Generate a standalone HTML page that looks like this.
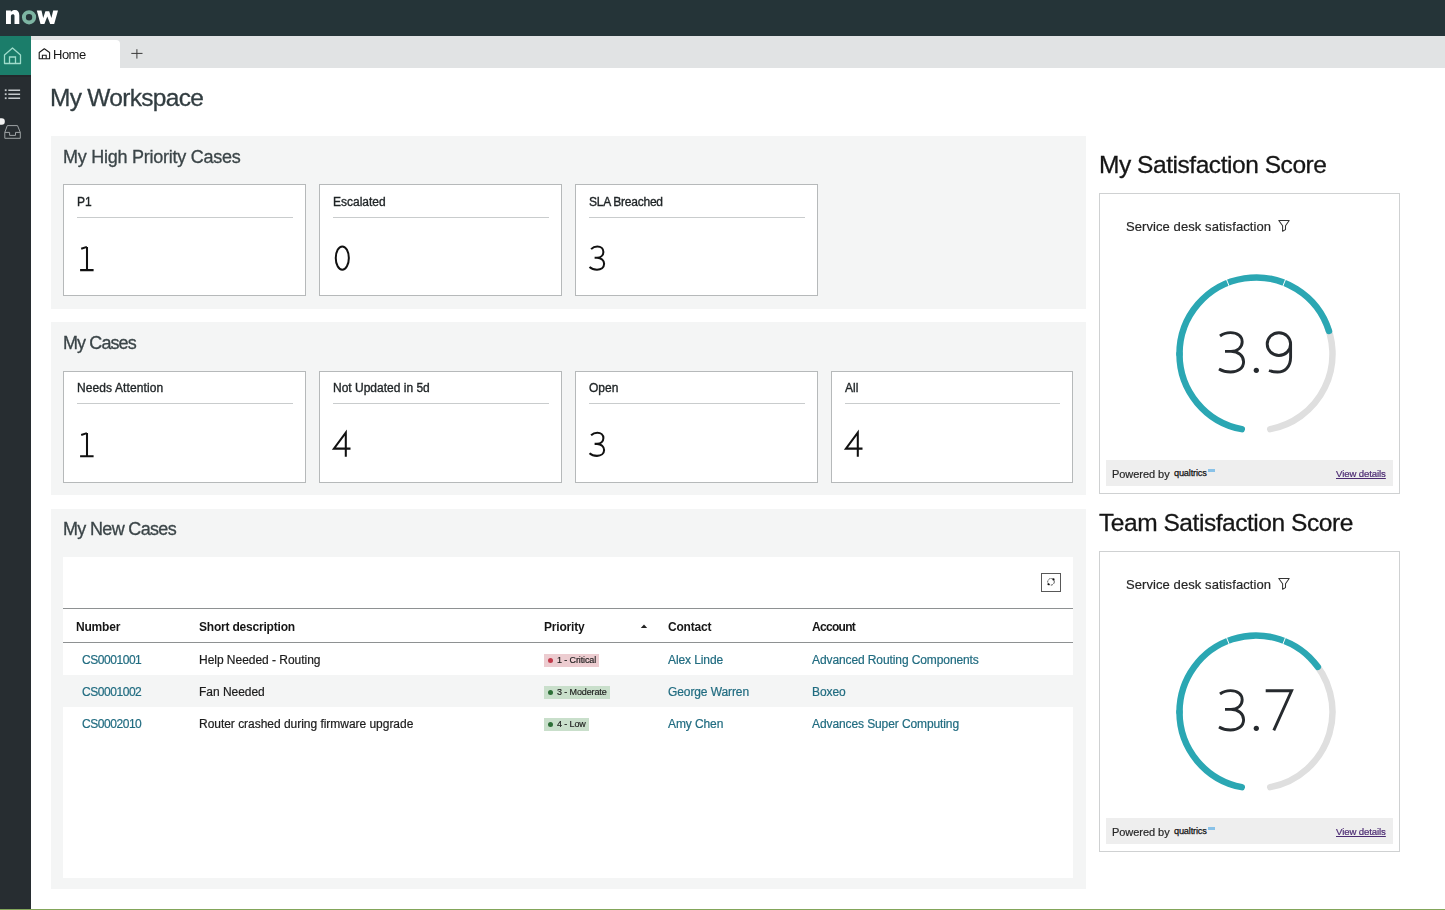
<!DOCTYPE html>
<html><head><meta charset="utf-8">
<style>
*{box-sizing:border-box;margin:0;padding:0}
html,body{-webkit-font-smoothing:antialiased;width:1445px;height:910px;overflow:hidden;background:#fff;font-family:"Liberation Sans",sans-serif;position:relative}
.a{position:absolute;white-space:nowrap}
.t,.ptitle,.lbl,.hdr,.cell,.badge,.stitle,.sds,.pow,.vd{will-change:transform}
.ptitle,.stitle,.tw{-webkit-text-stroke:0.3px currentColor}
.cell,.sds,.pow,.vd{-webkit-text-stroke:0.2px currentColor}
.t{position:absolute;white-space:nowrap;line-height:1}
#top{left:0;top:0;width:1445px;height:36px;background:#253438}
#side{left:0;top:36px;width:31px;height:874px;background:#272d31}
#homeact{left:0;top:36px;width:31px;height:39px;background:#1b7d6a}
#tabbar{left:31px;top:36px;width:1414px;height:32px;background:#e1e3e4}
#tab{left:31px;top:40px;width:89px;height:28px;background:#fff;border-top-right-radius:4px}
.panel{position:absolute;left:51px;width:1035px;background:#f4f5f5}
.card{position:absolute;width:243px;height:112px;background:#fff;border:1px solid #b6b9ba}
.card .lbl{position:absolute;left:13px;top:10px;font-size:12px;line-height:14px;color:#1f2426;letter-spacing:0px;-webkit-text-stroke:0.35px #1f2426}
.card.c2 .lbl{top:9px}.card.c2 .div{top:31px}
.card .div{position:absolute;left:13px;right:12px;top:32px;height:1px;background:#c9cccd}
.ptitle{position:absolute;left:12px;font-size:18px;line-height:18px;color:#3b4548;letter-spacing:-0.25px}
.hdr{position:absolute;font-size:12px;font-weight:bold;color:#161616;line-height:12px;letter-spacing:-0.2px}
.cell{position:absolute;font-size:12px;color:#1c1c1c;line-height:12px;letter-spacing:-0.1px}
.lnk{color:#216c80}
.badge{position:absolute;height:13px;font-size:9px;line-height:13px;padding-left:13px;padding-right:3px;color:#1a1a1a;letter-spacing:-0.12px;-webkit-text-stroke:0.15px #1a1a1a}
.badge i{position:absolute;left:3.5px;top:4px;width:5px;height:5px;border-radius:50%}
.stitle{position:absolute;left:1099px;font-size:24.5px;line-height:25px;color:#161616;letter-spacing:-0.45px}
.scard{position:absolute;left:1099px;width:301px;height:301px;border:1px solid #cfd1d2;background:#fff}
.sds{position:absolute;left:26px;top:26px;font-size:13px;line-height:14px;color:#262626;letter-spacing:0.08px}
.foot{position:absolute;left:6px;top:266px;width:287px;height:26px;background:#eeeeee}
.pow{position:absolute;left:6px;top:8px;font-size:11px;line-height:12px;color:#262626;letter-spacing:-0.05px}
.qual{position:absolute;left:68px;top:7.5px;font-size:9.5px;line-height:10px;color:#111;letter-spacing:-0.2px;transform:scaleX(0.97);transform-origin:left;-webkit-text-stroke:0.25px #111}
.xm{position:absolute;left:102px;top:9px;width:7px;height:2.5px;background:#6fb6e6;opacity:.8}
.vd{position:absolute;right:7px;top:7.5px;font-size:9.6px;line-height:12px;color:#4b2a72;text-decoration:underline;letter-spacing:-0.1px}
</style></head><body>
<div class="a" id="top"></div>
<svg class="a" style="left:0;top:0" width="70" height="36" viewBox="0 0 70 36">
  <path d="M6 24 V10.6 H10.9 V11.9 C11.9 10.7 13.3 10.1 15 10.1 C17.8 10.1 19.3 12.1 19.3 15.2 V24 H14.5 V15.8 C14.5 14.8 13.8 14.2 12.8 14.2 C11.7 14.2 10.9 15 10.9 16.1 V24 Z" fill="#fff"/>
  <circle cx="29.05" cy="17.3" r="5.15" fill="none" stroke="#7db5a3" stroke-width="3.9"/>
  <path d="M36.8 10.6 H41.5 L43.2 18 L45.4 11.2 H49.2 L51.4 18 L53.2 10.6 H58 L54.2 24 H50.2 L47.3 16.6 L44.4 24 H40.5 Z" fill="#fff"/>
</svg>
<div class="a" id="side"></div><div class="a" id="homeact"></div><div class="a" style="left:0;top:75px;width:31px;height:2px;background:#23272b"></div>
<svg class="a" style="left:0;top:36px" width="31" height="110" viewBox="0 36 31 110">
  <path d="M4.5 63.5 V55 L12.5 48 L20.5 55 V63.5 Z" fill="none" stroke="#9fdccb" stroke-width="1.3" stroke-linejoin="round"/>
  <path d="M9.5 63.5 V57 H15.5 V63.5" fill="none" stroke="#9fdccb" stroke-width="1.3"/>
  <g fill="#c5cacc">
    <rect x="4.8" y="89.3" width="1.8" height="1.8"/><rect x="8.3" y="89.5" width="11.8" height="1.5"/>
    <rect x="4.8" y="93.3" width="1.8" height="1.8"/><rect x="8.3" y="93.5" width="11.8" height="1.5"/>
    <rect x="4.8" y="97.3" width="1.8" height="1.8"/><rect x="8.3" y="97.5" width="11.8" height="1.5"/>
  </g>
  <path d="M4.8 132.4 L7.3 125.6 H17.5 L20.3 132.4 V138.3 H4.8 Z" fill="none" stroke="#9ea3a5" stroke-width="1"/>
  <path d="M4.8 132.4 H9.6 V135.4 H15.5 V132.4 H20.3" fill="none" stroke="#9ea3a5" stroke-width="1"/>
  <rect x="-4" y="118.3" width="8.8" height="6.4" rx="3" fill="#f2f2f2"/>
</svg>
<div class="a" id="tabbar"></div><div class="a" id="tab"></div>
<svg class="a" style="left:37px;top:46px" width="16" height="16" viewBox="37 46 16 16">
  <path d="M39.2 58.8 V52.5 L44.3 48.8 L49.6 52.5 V58.8 Z" fill="none" stroke="#1a1a1a" stroke-width="1.1" stroke-linejoin="round"/>
  <path d="M42.4 58.8 V55.3 H46.2 V58.8" fill="none" stroke="#1a1a1a" stroke-width="1.1"/>
</svg>
<div class="t" style="left:53px;top:48px;font-size:13px;color:#161616;letter-spacing:-0.5px">Home</div>
<svg class="a" style="left:128px;top:45px" width="18" height="18" viewBox="128 45 18 18">
  <path d="M136.9 49.2 V58.6 M131.3 53.4 H142.5" stroke="#3a3a3a" stroke-width="1"/>
</svg>
<div class="t tw" style="left:50px;top:85.5px;font-size:24.5px;color:#323d41;letter-spacing:-0.7px">My Workspace</div>
<div class="panel" style="top:136px;height:173px"><div class="ptitle" style="top:12px">My High Priority Cases</div></div>
<div class="panel" style="top:321.5px;height:173px"><div class="ptitle" style="top:12px;letter-spacing:-0.9px">My Cases</div></div>
<div class="panel" style="top:508.5px;height:380.5px"><div class="ptitle" style="top:11px;letter-spacing:-0.67px">My New Cases</div></div>
<div class="card" style="left:63px;top:184px;width:243px"><div class="lbl" style="letter-spacing:0px">P1</div><div class="div"></div><svg style="position:absolute;left:-1px;top:-1px" width="243" height="112" viewBox="0 0 243 112"><path d="M18.2 64.8 L23.9 62.9 M24 62.9 V86.2 M17.1 86.1 H30.6" transform="translate(0 0)" fill="none" stroke="#111" stroke-width="2.05"/></svg></div>
<div class="card" style="left:319px;top:184px;width:243px"><div class="lbl" style="letter-spacing:0px">Escalated</div><div class="div"></div><svg style="position:absolute;left:-1px;top:-1px" width="243" height="112" viewBox="0 0 243 112"><ellipse cx="23.3" cy="74.1" rx="6.55" ry="11.65" fill="none" stroke="#111" stroke-width="2"/></svg></div>
<div class="card" style="left:575px;top:184px;width:243px"><div class="lbl" style="letter-spacing:-0.25px">SLA Breached</div><div class="div"></div><svg style="position:absolute;left:-1px;top:-1px" width="243" height="112" viewBox="0 0 243 112"><path d="M16.1 65.1 C18 63.2 20 62.5 22.3 62.5 C26 62.5 28.4 64.8 28.4 67.9 C28.4 71.3 25.6 73.7 22 73.7 H19.6 M22 73.7 C26.2 73.7 29.1 76.4 29.1 79.8 C29.1 83.4 26 85.7 22 85.7 C19 85.7 16.4 84.8 14.5 83.1" transform="translate(0 0)" fill="none" stroke="#111" stroke-width="2.05"/></svg></div>
<div class="card c2" style="left:63px;top:371px;width:243px"><div class="lbl" style="letter-spacing:0.1px">Needs Attention</div><div class="div"></div><svg style="position:absolute;left:-1px;top:-1px" width="243" height="112" viewBox="0 0 243 112"><path d="M18.2 64.8 L23.9 62.9 M24 62.9 V86.2 M17.1 86.1 H30.6" transform="translate(0 -0.8)" fill="none" stroke="#111" stroke-width="2.05"/></svg></div>
<div class="card c2" style="left:319px;top:371px;width:243px"><div class="lbl" style="letter-spacing:0px">Not Updated in 5d</div><div class="div"></div><svg style="position:absolute;left:-1px;top:-1px" width="243" height="112" viewBox="0 0 243 112"><path d="M26.8 86.6 V62.4 L14.9 78.4 H31.5" transform="translate(0 -0.8)" fill="none" stroke="#111" stroke-width="2.05"/></svg></div>
<div class="card c2" style="left:575px;top:371px;width:243px"><div class="lbl" style="letter-spacing:0px">Open</div><div class="div"></div><svg style="position:absolute;left:-1px;top:-1px" width="243" height="112" viewBox="0 0 243 112"><path d="M16.1 65.1 C18 63.2 20 62.5 22.3 62.5 C26 62.5 28.4 64.8 28.4 67.9 C28.4 71.3 25.6 73.7 22 73.7 H19.6 M22 73.7 C26.2 73.7 29.1 76.4 29.1 79.8 C29.1 83.4 26 85.7 22 85.7 C19 85.7 16.4 84.8 14.5 83.1" transform="translate(0 -0.8)" fill="none" stroke="#111" stroke-width="2.05"/></svg></div>
<div class="card c2" style="left:831px;top:371px;width:242px"><div class="lbl" style="letter-spacing:0px">All</div><div class="div"></div><svg style="position:absolute;left:-1px;top:-1px" width="243" height="112" viewBox="0 0 243 112"><path d="M26.8 86.6 V62.4 L14.9 78.4 H31.5" transform="translate(0 -0.8)" fill="none" stroke="#111" stroke-width="2.05"/></svg></div>
<div class="a" style="left:63px;top:557px;width:1010px;height:321px;background:#fff"></div>
<div class="a" style="left:1041px;top:573px;width:20px;height:19px;border:1px solid #585858"></div>
<svg class="a" style="left:1044px;top:575px" width="14" height="14" viewBox="1044 575 14 14">
 <circle cx="1051" cy="581.8" r="3.3" fill="none" stroke="#444" stroke-width="0.9" stroke-dasharray="2.2 0.9"/>
 <circle cx="1053.5" cy="579.4" r="1.05" fill="#111"/>
 <circle cx="1048.5" cy="584.2" r="1.05" fill="#111"/>
</svg>
<div class="a" style="left:63px;top:608px;width:1010px;height:1px;background:#8e9192"></div>
<div class="a" style="left:63px;top:642px;width:1010px;height:1px;background:#8e9192"></div>
<div class="a" style="left:63px;top:675px;width:1010px;height:32px;background:#f4f5f5"></div>
<div class="hdr" style="left:76px;top:621px">Number</div>
<div class="hdr" style="left:199px;top:621px">Short description</div>
<div class="hdr" style="left:544px;top:621px">Priority</div>
<svg class="a" style="left:639px;top:622px" width="10" height="8" viewBox="0 0 10 8"><path d="M1.8 6 L5 2.6 L8.2 6 Z" fill="#222"/></svg>
<div class="hdr" style="left:668px;top:621px">Contact</div>
<div class="hdr" style="left:812px;top:621px;letter-spacing:-0.7px">Account</div>
<div class="cell lnk" style="left:82px;top:654px;letter-spacing:-0.45px">CS0001001</div>
<div class="cell" style="left:199px;top:654px;letter-spacing:-0.03px">Help Needed - Routing</div>
<div class="badge" style="left:544px;top:654px;background:#ecccd0"><i style="background:#c23a4b"></i>1 - Critical</div>
<div class="cell lnk" style="left:668px;top:654px">Alex Linde</div>
<div class="cell lnk" style="left:812px;top:654px">Advanced Routing Components</div>
<div class="cell lnk" style="left:82px;top:686px;letter-spacing:-0.45px">CS0001002</div>
<div class="cell" style="left:199px;top:686px;letter-spacing:-0.03px">Fan Needed</div>
<div class="badge" style="left:544px;top:686px;background:#c9dfcb"><i style="background:#2d6f37"></i>3 - Moderate</div>
<div class="cell lnk" style="left:668px;top:686px">George Warren</div>
<div class="cell lnk" style="left:812px;top:686px">Boxeo</div>
<div class="cell lnk" style="left:82px;top:718px;letter-spacing:-0.45px">CS0002010</div>
<div class="cell" style="left:199px;top:718px;letter-spacing:-0.03px">Router crashed during firmware upgrade</div>
<div class="badge" style="left:544px;top:718px;background:#c9dfcb"><i style="background:#2d6f37"></i>4 - Low</div>
<div class="cell lnk" style="left:668px;top:718px">Amy Chen</div>
<div class="cell lnk" style="left:812px;top:718px">Advances Super Computing</div>
<div class="stitle" style="top:151.5px">My Satisfaction Score</div><div class="scard" style="top:193.0px"><div class="sds">Service desk satisfaction</div><div class="foot"><div class="pow">Powered by</div><div class="qual">qualtrics</div><div class="xm"></div><div class="vd">View details</div></div></div>
<div class="stitle" style="top:509.5px">Team Satisfaction Score</div><div class="scard" style="top:551.0px"><div class="sds">Service desk satisfaction</div><div class="foot"><div class="pow">Powered by</div><div class="qual">qualtrics</div><div class="xm"></div><div class="vd">View details</div></div></div>
<svg class="a" style="left:1165px;top:258.8px" width="190" height="190" viewBox="1165 258.8 190 190"><path d="M1323.86 318.48 A76.5 76.5 0 0 1 1270.20 428.97" fill="none" stroke="#dfdfdf" stroke-width="6.5" stroke-linecap="round"/><path d="M1241.80 428.97 A76.5 76.5 0 0 1 1179.50 353.80" fill="none" stroke="#2ba7b3" stroke-width="6.5" stroke-linecap="round"/><path d="M1179.50 353.80 A76.5 76.5 0 0 1 1328.96 330.79" fill="none" stroke="#2ba7b3" stroke-width="6.5" stroke-linecap="round"/><path d="M1229.50 286.86 L1226.18 278.49" stroke="#fff" stroke-width="1"/><path d="M1282.50 286.86 L1285.82 278.49" stroke="#fff" stroke-width="1"/><g transform="translate(0 0.0)" fill="none" stroke="#262a2e" stroke-width="2.9"><path d="M1220 335.8 C1223 333.5 1226.5 332.4 1230.5 332.4 C1237.5 332.4 1242.2 336.2 1242.2 341.6 C1242.2 347.3 1237.5 351.2 1231 351.2 H1225 M1231 351.2 C1238.5 351.2 1243.6 355.6 1243.6 361.6 C1243.6 367.7 1238.5 371.8 1230.6 371.8 C1226 371.8 1222 370.6 1219 368.8"/><circle cx="1256.3" cy="370.1" r="2.6" fill="#262a2e" stroke="none"/><ellipse cx="1278.9" cy="343.9" rx="11.7" ry="11.4"/><path d="M1290.6 343.9 V357 C1290.6 366.5 1285 371.8 1277.5 371.8 C1274.5 371.8 1271.5 371.3 1269 370.3"/></g></svg>
<svg class="a" style="left:1165px;top:616.8px" width="190" height="190" viewBox="1165 616.8 190 190"><path d="M1309.05 656.68 A76.5 76.5 0 0 1 1270.20 786.97" fill="none" stroke="#dfdfdf" stroke-width="6.5" stroke-linecap="round"/><path d="M1241.80 786.97 A76.5 76.5 0 0 1 1179.50 711.80" fill="none" stroke="#2ba7b3" stroke-width="6.5" stroke-linecap="round"/><path d="M1179.50 711.80 A76.5 76.5 0 0 1 1317.81 666.73" fill="none" stroke="#2ba7b3" stroke-width="6.5" stroke-linecap="round"/><path d="M1229.50 644.86 L1226.18 636.49" stroke="#fff" stroke-width="1"/><path d="M1282.50 644.86 L1285.82 636.49" stroke="#fff" stroke-width="1"/><g transform="translate(0 357.99999999999994)" fill="none" stroke="#262a2e" stroke-width="2.9"><path d="M1220 335.8 C1223 333.5 1226.5 332.4 1230.5 332.4 C1237.5 332.4 1242.2 336.2 1242.2 341.6 C1242.2 347.3 1237.5 351.2 1231 351.2 H1225 M1231 351.2 C1238.5 351.2 1243.6 355.6 1243.6 361.6 C1243.6 367.7 1238.5 371.8 1230.6 371.8 C1226 371.8 1222 370.6 1219 368.8"/><circle cx="1256.3" cy="370.1" r="2.6" fill="#262a2e" stroke="none"/><path d="M1265.7 332.6 H1291.6 L1273.8 372.2"/></g></svg>
<svg class="a" style="left:1275px;top:217px" width="18" height="16" viewBox="1275 217 18 16"><path d="M1278.8 220.5 H1289.2 L1285.5 225.8 V229.6 L1282.6 231.2 V225.8 Z" fill="none" stroke="#333" stroke-width="1.05" stroke-linejoin="round"/></svg>
<svg class="a" style="left:1275px;top:575px" width="18" height="16" viewBox="1275 575 18 16"><path d="M1278.8 578.5 H1289.2 L1285.5 583.8 V587.6 L1282.6 589.2 V583.8 Z" fill="none" stroke="#333" stroke-width="1.05" stroke-linejoin="round"/></svg>
<div class="a" style="left:0;top:908.5px;width:1445px;height:1.5px;background:#83a65a"></div>
</body></html>
